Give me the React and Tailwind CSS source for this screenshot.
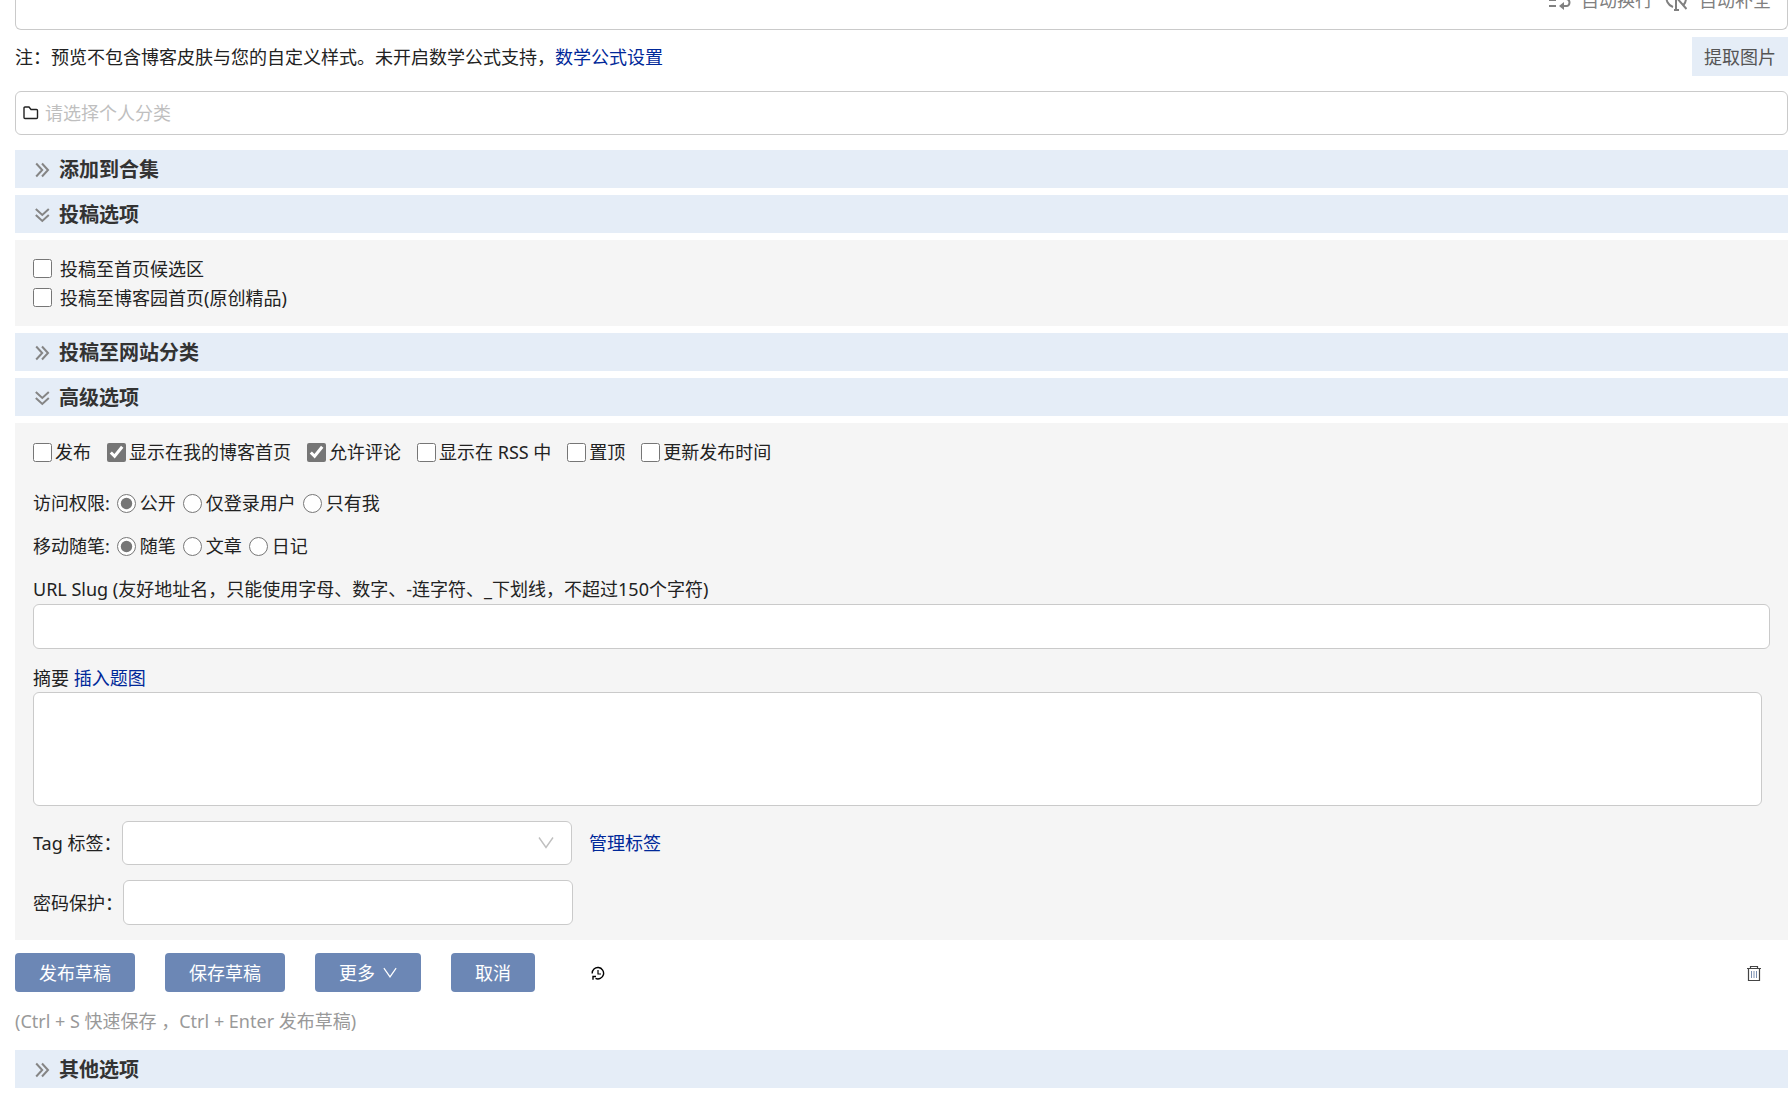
import { useState } from "react";

const PUBLISH_FLAGS = [
  { id: "published", label: "发布", checked: false },
  { id: "on-home", label: "显示在我的博客首页", checked: true },
  { id: "comments", label: "允许评论", checked: true },
  { id: "rss", label: "显示在 RSS 中", checked: false },
  { id: "pinned", label: "置顶", checked: false },
  { id: "update-time", label: "更新发布时间", checked: false },
];

const ACCESS_LEVELS = ["公开", "仅登录用户", "只有我"];
const POST_TYPES = ["随笔", "文章", "日记"];

const FIELD = "rounded-md border border-[#cacaca] bg-white outline-none";
const BOX = "size-[19px] shrink-0 accent-[#767676]";
const ACTION =
  "flex h-[39px] items-center gap-2 rounded bg-[#6c87b5] px-6 text-white";

function DoubleChevron({ open }) {
  return (
    <svg
      viewBox="0 0 16 16"
      className="size-4 shrink-0"
      fill="none"
      stroke="#858585"
      strokeWidth="2"
    >
      {open ? (
        <path d="M.8 2l6.500 6 6.500-6M.8 8l6.500 6 6.500-6" />
      ) : (
        <path d="M1.200 1.500l6 6.500-6 6.500M7 1.500l6 6.500-6 6.500" />
      )}
    </svg>
  );
}

function ThinChevron({ className }) {
  return (
    <svg viewBox="0 0 16 16" className={className} fill="none" stroke="currentColor">
      <path d="M1 2.500l7 10 7-10" strokeWidth="1.400" />
    </svg>
  );
}

function SectionHeader({ title, open = false }) {
  return (
    <button
      type="button"
      aria-expanded={open}
      className="flex h-[38px] w-full items-center gap-2 bg-[#e5edf7] pt-px pl-5 text-xl font-bold text-[#333]"
    >
      <DoubleChevron open={open} />
      <span>{title}</span>
    </button>
  );
}

function RadioRow({ legend, name, options }) {
  const [value, setValue] = useState(options[0]);

  return (
    <div role="radiogroup" aria-label={legend} className="flex items-center gap-[7px]">
      <span>{legend}:</span>
      {options.map((option) => (
        <label key={option} className="flex items-center gap-1">
          <input
            type="radio"
            name={name}
            checked={value === option}
            onChange={() => setValue(option)}
            className={BOX}
          />
          {option}
        </label>
      ))}
    </div>
  );
}

function EditorFooter() {
  return (
    <div className="flex h-[30px] items-end justify-end gap-3 overflow-hidden rounded-b-md border border-t-0 border-[#cacaca] pr-4 pb-[15px] text-[#808080]">
      <button type="button" className="flex items-center gap-[10px]">
        <svg viewBox="0 0 22 22" className="size-[22px]" fill="none" stroke="currentColor" strokeWidth="2">
          <path d="M0 5h20M0 11h7M0 17h7M14 17h3.500a3 3.500 0 0 0 0-7H11" />
          <path d="M10 17l5-4v8z" fill="currentColor" stroke="none" />
        </svg>
        自动换行
      </button>
      <button type="button" className="flex items-center gap-3">
        <svg viewBox="0 0 22 22" className="size-[22px]" fill="none" stroke="currentColor" strokeWidth="2">
          <path d="M8 18A9.500 9.500 0 0 1 2 6M18.500 16A9.500 9.500 0 0 0 20 6" />
          <path d="M11 21V8l10.500 12M9 21h5" />
        </svg>
        自动补全
      </button>
    </div>
  );
}

function AdvancedPanel() {
  return (
    <div className="mb-[13px] flex flex-col bg-[#f5f5f5] px-[18px] py-[15px]">
      <div className="flex flex-wrap items-center gap-x-4">
        {PUBLISH_FLAGS.map((flag) => (
          <label key={flag.id} className="flex items-center gap-[3px]">
            <input type="checkbox" defaultChecked={flag.checked} className={BOX} />
            {flag.label}
          </label>
        ))}
      </div>

      <div className="mt-[23px] flex flex-col gap-[15px]">
        <RadioRow legend="访问权限" name="access" options={ACCESS_LEVELS} />
        <RadioRow legend="移动随笔" name="type" options={POST_TYPES} />
        <div className="flex flex-col gap-px">
          <label htmlFor="slug">
            URL Slug (友好地址名，只能使用字母、数字、-连字符、_下划线，不超过150个字符)
          </label>
          <input id="slug" type="text" className={`${FIELD} h-[45px] w-full px-3`} />
        </div>
        <div className="flex flex-col">
          <div>
            <label htmlFor="summary">摘要</label>{" "}
            <a href="#cover" className="text-[#002899]">
              插入题图
            </a>
          </div>
          <textarea id="summary" className={`${FIELD} mr-2 h-[114px] resize-none p-3`} />
        </div>
        <div className="flex items-center">
          <label htmlFor="tags" className="w-[89px]">
            Tag 标签：
          </label>
          <div className="relative">
            <select id="tags" className={`${FIELD} block h-11 w-[450px] appearance-none px-3`} />
            <ThinChevron className="pointer-events-none absolute top-[14px] right-[18px] size-4 text-[#bfbfbf]" />
          </div>
          <a href="#tags" className="ml-[17px] text-[#002899]">
            管理标签
          </a>
        </div>
        <div className="flex items-center">
          <label htmlFor="password" className="w-[90px]">
            密码保护：
          </label>
          <input id="password" type="password" className={`${FIELD} h-[45px] w-[450px] px-3`} />
        </div>
      </div>
    </div>
  );
}

function Actions() {
  return (
    <div className="flex items-center gap-[30px]">
      <button type="button" className={ACTION}>发布草稿</button>
      <button type="button" className={ACTION}>保存草稿</button>
      <button type="button" className={ACTION}>
        更多
        <ThinChevron className="size-[14px]" />
      </button>
      <button type="button" className={ACTION}>取消</button>
      <button type="button" aria-label="历史记录" className="ml-[26px] text-black">
        <svg viewBox="0 0 14 14" className="size-[14px]" fill="none" stroke="currentColor" strokeWidth="1.400">
          <path d="M1.200 7.500A5.700 5.700 0 1 1 4.500 12.400M2 13.800V10.500H5" />
          <path d="M7 4v4h3" strokeWidth="1.200" />
        </svg>
      </button>
      <button type="button" aria-label="删除" className="mr-[26px] ml-auto text-[#444]">
        <svg viewBox="0 0 16 16" className="size-4" fill="none" stroke="currentColor">
          <path d="M1 3.500h14M4.500 3.500v-2h7v2M2.500 3.500v12h11v-12" strokeWidth="1.200" />
          <path d="M5.500 6v7M8 6v7M10.500 6v7" stroke="#7a8fb0" />
        </svg>
      </button>
    </div>
  );
}

export default function App() {
  return (
    <main
      lang="zh-CN"
      className="bg-white pr-[3px] pl-[15px] font-['Noto_Sans','Noto_Sans_CJK_SC',sans-serif] text-lg leading-[28px] text-[#222]"
    >
      <EditorFooter />

      <div className="mt-[7px] flex items-center justify-between">
        <p>
          注：预览不包含博客皮肤与您的自定义样式。未开启数学公式支持，
          <a href="#math" className="text-[#002899]">
            数学公式设置
          </a>
        </p>
        <button type="button" className="h-[39px] bg-[#e5edf7] px-3 text-[#555]">
          提取图片
        </button>
      </div>

      <div className={`${FIELD} mt-[15px] mb-[15px] flex h-11 items-center gap-[6px] px-[7px]`}>
        <svg viewBox="0 0 16 16" className="size-4 shrink-0" fill="none" stroke="#222" strokeWidth="1.400">
          <path d="M2 2h4l2 2.500h5.500a1 1 0 0 1 1 1v7a1 1 0 0 1-1 1H2a1 1 0 0 1-1-1V3a1 1 0 0 1 1-1z" />
        </svg>
        <select
          aria-label="个人分类"
          className="flex-1 appearance-none bg-transparent text-[#bfbfbf] outline-none"
        >
          <option>请选择个人分类</option>
        </select>
      </div>

      <div className="flex flex-col gap-[7px]">
        <SectionHeader title="添加到合集" />
        <SectionHeader title="投稿选项" open />
        <div className="flex h-[86px] flex-col justify-center bg-[#f5f5f5] px-[18px]">
          <label className="flex h-[29px] items-center gap-2">
            <input type="checkbox" className={BOX} />
            投稿至首页候选区
          </label>
          <label className="flex h-[29px] items-center gap-2">
            <input type="checkbox" className={BOX} />
            投稿至博客园首页(原创精品)
          </label>
        </div>
        <SectionHeader title="投稿至网站分类" />
        <SectionHeader title="高级选项" open />
        <AdvancedPanel />
      </div>

      <Actions />
      <p className="mt-[15px] mb-[15px] text-[#999]">
        (Ctrl + S 快速保存 ，Ctrl + Enter 发布草稿)
      </p>
      <SectionHeader title="其他选项" />
    </main>
  );
}
